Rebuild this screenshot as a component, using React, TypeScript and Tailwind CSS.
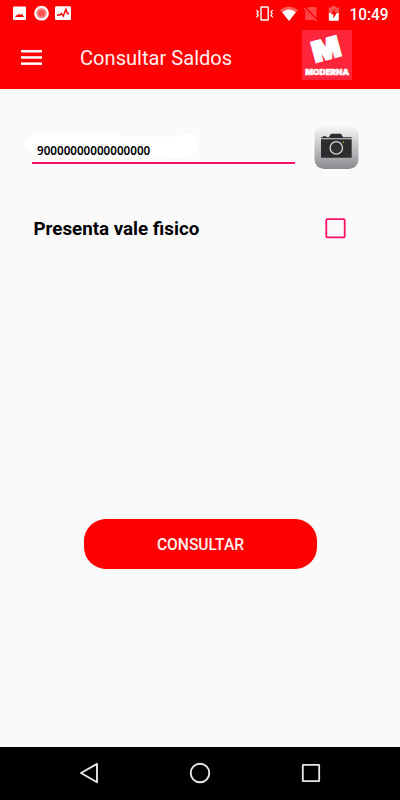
import { useState } from "react";

const StatusBar = () => {
  return (
    <div className="h-7 w-full">
      <svg width="400" height="28" viewBox="0 0 400 28" fill="#fff">
        {/* image */}
        <path
          fillRule="evenodd"
          d="M14 6.5h11a1 1 0 0 1 1 1V19a1 1 0 0 1-1 1H14a1 1 0 0 1-1-1V7.5a1 1 0 0 1 1-1zM15 17h9l-2.2-3.3-1.6 1.3-1.6-1.3-1.3 1.9-.9-.7z"
        />
        {/* record */}
        <circle cx="41.5" cy="13.2" r="7.4" />
        <circle cx="41.5" cy="13.2" r="5.2" fill="#ff8a8a" />
        <circle cx="41.5" cy="13.2" r="3.2" fill="#ff5252" />
        {/* activity */}
        <rect x="55" y="6.3" width="16" height="13.7" rx="1.2" />
        <path
          d="M57 15h2.8l1.5-1.5 2 2.5 2.6-6.8 1.5 4.3h1.8"
          fill="none"
          stroke="#f00"
          strokeWidth="1.4"
        />
        {/* vibrate */}
        <rect x="261" y="7" width="7.2" height="13" rx="0.5" fill="none" stroke="#fff" strokeWidth="1.4" />
        <path
          d="M256.4 10.2l1.9 1.7-1.3 1.8 1.3 1.8-1.9 1.7M272.8 10.2l-1.9 1.7 1.3 1.8-1.3 1.8 1.9 1.7"
          fill="none"
          stroke="#fff"
          strokeWidth="1.2"
        />
        {/* wifi */}
        <path d="M280 10q9-7 18 0l-9 10.6z" fill="#ff5c5c" />
        <path d="M282.2 12.2q6.8-5.6 13.6 0l-6.8 8.8z" />
        {/* no sim */}
        <path
          d="M308.6 7h6.9a1 1 0 0 1 1 1v10l-9.5-9.5zM305.2 10l9.8 10h-8.8a1 1 0 0 1-1-1z"
          fill="#ff4545"
        />
        <path d="M304.3 7.8l12.6 12.8" stroke="#f00" strokeWidth="2.4" />
        <path d="M304 8.3l12.6 12.6" stroke="#ff6060" strokeWidth="1.1" />
        {/* battery */}
        <path d="M331.8 6h4v1.5h3V13h-10V7.5h3z" fill="#ff5252" />
        <path d="M328.8 13h10v7a.8.8 0 0 1-.8.8h-8.4a.8.8 0 0 1-.8-.8z" />
        <path d="M334.9 8.5l-4 5.8h2.4v4.2l3.8-6h-2.2z" fill="#f00" />
        <text
          x="349.5"
          y="19.6"
          fontSize="16"
          fontWeight="500"
          fontFamily="Roboto, sans-serif"
          textLength="39"
          lengthAdjust="spacingAndGlyphs"
        >
          10:49
        </text>
      </svg>
    </div>
  );
};

const Logo = () => {
  return (
    <svg width="50" height="50" viewBox="0 0 50 50" className="bg-[#ff263b]">
      <text
        x="0"
        y="0"
        transform="translate(13.2 32.4) rotate(-15)"
        fontFamily="Inter, sans-serif"
        fontSize="28"
        fontWeight="900"
        textLength="28"
        lengthAdjust="spacingAndGlyphs"
        fill="#fff"
        stroke="#fff"
        strokeWidth="2"
      >
        M
      </text>
      <text
        x="3.2"
        y="44.5"
        fontFamily="Inter, sans-serif"
        fontSize="7.8"
        fontWeight="900"
        textLength="43.8"
        lengthAdjust="spacingAndGlyphs"
        fill="#fff"
        stroke="#fff"
        strokeWidth="0.5"
      >
        MODERNA
      </text>
    </svg>
  );
};

const Header = () => {
  return (
    <header className="h-[88.7px] bg-[#ff0000]">
      <StatusBar />
      <div className="flex items-start pl-[21px]">
        <button className="mt-[22px]">
          <svg width="21" height="15" viewBox="0 0 21 15" fill="#fff">
            <rect width="21" height="2.5" />
            <rect y="6.2" width="21" height="2.5" />
            <rect y="12.4" width="21" height="2.5" />
          </svg>
        </button>
        <h1 className="mt-[18px] ml-[38px] w-[222px] text-[20.1px] leading-6 text-[#fff0f0]">
          Consultar Saldos
        </h1>
        <div className="mt-0.5">
          <Logo />
        </div>
      </div>
    </header>
  );
};

const CameraIcon = () => {
  return (
    <svg width="45" height="44" viewBox="0 0 45 44">
      <defs>
        <linearGradient id="camera" x1="0" y1="0" x2="0" y2="1">
          <stop offset="0" stopColor="#fafafa" />
          <stop offset="1" stopColor="#8b8b90" />
        </linearGradient>
      </defs>
      <rect x="0.5" width="44" height="44" rx="9.5" fill="url(#camera)" />
      <path
        d="M7 13.3v-1.1h1.5l.5-1h3l.6 1h2.2l1.6-2.8q.4-.6 1.1-.6h8.9q.7 0 1.1.6l1.6 2.8h8.7v1.1z"
        fill="#2d2d2f"
      />
      <rect x="7" y="14.2" width="30.7" height="18.6" rx="0.5" fill="#2d2d2f" />
      <circle cx="22.3" cy="22.9" r="6.2" fill="#303033" stroke="#d2d2d4" strokeWidth="1.3" />
      <circle cx="29.4" cy="17.2" r="0.8" fill="#e0b13c" />
    </svg>
  );
};

const NavBar = () => {
  return (
    <nav className="flex h-[53.5px] items-center justify-between bg-black pr-[79px] pl-[79px]">
      <svg width="20" height="22" viewBox="0 0 20 22" fill="none" stroke="#e8e8e8" strokeWidth="1.9">
        <path d="M18 1.9v18.4L2 11z" strokeLinejoin="round" />
      </svg>
      <svg width="22" height="22" viewBox="0 0 22 22" fill="none" stroke="#e8e8e8" strokeWidth="1.9">
        <circle cx="11" cy="11" r="9.3" />
      </svg>
      <svg width="20" height="20" viewBox="0 0 20 20" fill="none" stroke="#e8e8e8" strokeWidth="1.8">
        <rect x="1.8" y="1.8" width="16.4" height="16.4" rx="0.5" />
      </svg>
    </nav>
  );
};

const App = () => {
  const [fisico, setFisico] = useState(false);

  return (
    <div className="flex h-[800px] w-[400px] flex-col overflow-hidden bg-[#fafafa] font-['Roboto',sans-serif]">
      <Header />

      <main className="flex-1">
        <div className="flex items-start pt-[36.3px] pl-8">
          <div className="relative mt-[7px] h-8 w-[263px] border-b-2 border-[#f8126b]">
            <svg
              className="absolute top-0 -left-2"
              width="180"
              height="28"
              viewBox="0 0 180 28"
              fill="#fff"
            >
              <path d="M2 9Q6 4 10 2H94V4Q126 6 152 4Q160 0 171 4Q178 9 174 19Q168 26 154 26Q110 22 90 27H10Q8 20 6 18Q-1 15 2 9z" />
            </svg>
            <p className="relative pt-[11px] pl-[5px] font-['Noto_Sans',sans-serif] text-[11.65px] leading-4 font-semibold text-black">
              90000000000000000
            </p>
          </div>
          <button className="ml-[19px]">
            <CameraIcon />
          </button>
        </div>

        <div className="mt-[49.5px] flex items-start pl-[33.5px]">
          <p className="w-[291px] pt-px text-[18.75px] leading-[21px] font-bold text-black">
            Presenta vale fisico
          </p>
          <button onClick={() => setFisico(!fisico)}>
            <svg width="22" height="21" viewBox="0 0 22 21">
              <rect
                x="1.3"
                y="1.2"
                width="18.4"
                height="18.2"
                rx="1"
                fill={fisico ? "#f8126b" : "none"}
                stroke="#f8126b"
                strokeWidth="1.8"
              />
            </svg>
          </button>
        </div>

        <button className="mt-[279px] ml-[83.5px] flex h-[49.5px] w-[233px] items-center justify-center rounded-[22px] bg-[#ff0000] text-[15.6px] font-medium text-[#fff0f0]">
          <span className="pt-[3px] pl-px">CONSULTAR</span>
        </button>
      </main>

      <NavBar />
    </div>
  );
};

export default App;
